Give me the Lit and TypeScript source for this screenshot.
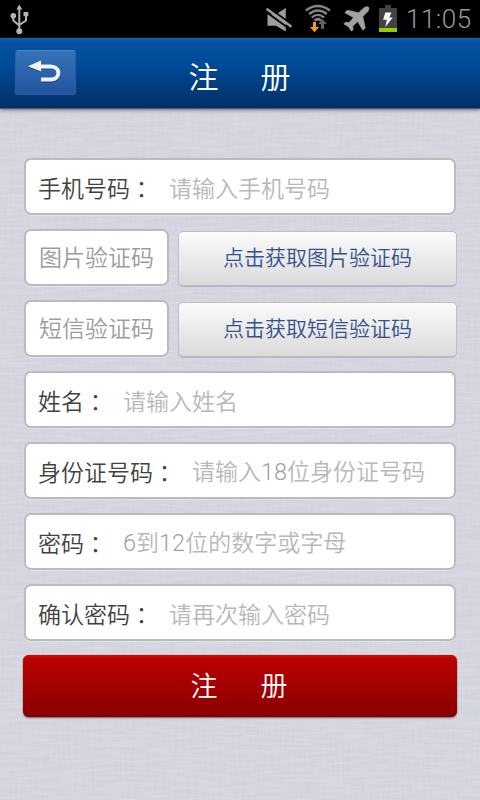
import { LitElement, html, css, nothing } from "lit";
import { customElement, property } from "lit/decorators.js";

@customElement("status-bar")
class StatusBar extends LitElement {
  static styles = css`
    :host {
      display: flex;
      align-items: center;
      height: 38px;
      padding: 0 7px 0 10px;
      background: #000;
      box-sizing: border-box;
    }
    svg { display: block; flex: none; }
    .spacer { flex: 1; }
    .wifi { margin-left: 11px; }
    .plane { margin-left: 11px; }
    .battery { margin-left: 9px; }
    .clock {
      width: 67px;
      margin-left: 9px;
      font: 300 26px/38px Roboto, sans-serif;
      letter-spacing: 0.5px;
      color: #9a9a9a;
      white-space: nowrap;
    }
  `;

  render() {
    return html`
      <svg width="20" height="38" viewBox="10 0 20 38" fill="#b3b3b3">
        <path d="M19.3 4.5l3 5h-6z" />
        <path d="M19.3 8v22M13.3 17v3.5l6 5M26 14v6.5l-6.7 4.5" fill="none" stroke="#b3b3b3" stroke-width="2" />
        <circle cx="13.3" cy="15.7" r="2.8" />
        <rect x="23.5" y="12" width="4.8" height="4.2" />
        <circle cx="19.3" cy="31.2" r="3" />
      </svg>
      <span class="spacer"></span>
      <svg width="28" height="38" viewBox="266 0 28 38">
        <path d="M267.5 14.5h8L285.8 8v23.5l-9.8-5.8h-8.5z" fill="#9d9d9d" />
        <path d="M267 6.5l26 18.8M265 11.2l26 18.8" stroke="#000" stroke-width="1.8" />
        <path d="M266.5 8.8L291.5 26.8" stroke="#9d9d9d" stroke-width="2.4" />
      </svg>
      <svg class="wifi" width="26" height="38" viewBox="305 0 26 38">
        <g fill="none" stroke="#858585" stroke-width="2.3">
          <path d="M305.8 10.5Q317.8 1.5 330 10.5" />
          <path d="M309 14Q317.8 7 326.8 14" />
          <path d="M311.8 17.5Q317.8 12.3 324 17.5" />
          <path d="M314.6 20.6Q317.8 17.6 321 20.6" stroke-width="2.6" />
        </g>
        <path d="M313 22h3v5h3l-4.5 5.3-4.5-5.3h3z" fill="#f79a1c" />
        <path d="M322.5 19l4.3 5h-2.8v5h-3v-5h-2.8z" fill="#626262" />
      </svg>
      <svg class="plane" width="28" height="38" viewBox="342 0 28 38">
        <path d="M368.5 7.2c1 1.2.2 3.4-1.2 4.8l-4.5 4.6 2.4 11.4-2.3 2.2-5.2-8.6-5 4.5.4 3.4-1.6 1.7-3-4.4-4.6-2.9 1.6-1.6 3.6.3 4.5-5-8.7-4.9 2.2-2.4 11.6 2.4 4.7-4.5c1.5-1.3 4-2.1 5.1-1z" fill="#a2a2a2" stroke="#a2a2a2" stroke-width=".7" />
      </svg>
      <svg class="battery" width="18" height="38" viewBox="379 0 18 38">
        <path d="M385 5h6v3h6v24h-18V8h6z" fill="#414141" />
        <rect x="379" y="28" width="18" height="4" fill="#94cd00" />
        <path d="M385.3 12.5h6.2l-2.2 5h3.5L385.3 27l1.6-7.2h-3.8z" fill="#fff" />
      </svg>
      <span class="clock">11:05</span>
    `;
  }
}

@customElement("form-field")
class FormField extends LitElement {
  @property() label = "";
  @property() hint = "";

  static styles = css`
    :host {
      display: flex;
      align-items: center;
      height: 57px;
      box-sizing: border-box;
      padding: 0 0 0 12px;
      border: 2px solid #bababf;
      border-radius: 7px;
      background: #fff;
      box-shadow: 0 1px 0 #e3e3ea;
      font: 350 23px/34px "Noto Sans CJK SC", sans-serif;
      white-space: nowrap;
      overflow: hidden;
    }
    .label { color: #424242; margin-right: 16px; }
    .colon { font: 350 23px/30px "Noto Sans CJK TC", sans-serif; position: relative; top: 1px; }
    .hint { color: #b8b8b8; }
    .code { color: #9c9c9c; position: relative; top: -2px; margin-left: 1px; }
    .latin { font-family: Roboto, sans-serif; font-size: 23.5px; font-weight: 300; color: #a0a0a0; }
  `;

  private hintText() {
    return this.hint
      .split(/(\d+)/)
      .filter(Boolean)
      .map((part) => (/\d/.test(part) ? html`<span class="latin">${part}</span>` : part));
  }

  render() {
    return html`${this.label
        ? html`<span class="label">${this.label}<span class="colon">：</span></span>`
        : nothing}<span class=${this.label ? "hint" : "code"}>${this.hintText()}</span>`;
  }
}

@customElement("app-root")
class AppRoot extends LitElement {
  static styles = css`
    :host {
      display: flex;
      flex-direction: column;
      position: relative;
      width: 480px;
      height: 800px;
      overflow: hidden;
      background: #d4d5df;
      font-family: "Noto Sans CJK SC", sans-serif;
    }
    .weave { position: absolute; inset: 0; width: 100%; height: 100%; opacity: 0.3; }
    status-bar, header, main { position: relative; }
    header {
      display: grid;
      grid-template-columns: 76px 1fr 76px;
      height: 70px;
      background: linear-gradient(#1660ad 0, #0250a0 5px, #014c9a 35%, #003a7a 75%, #003068 100%);
      box-shadow: 0 1px 1px #555d6b, 0 2px 4px #77777c;
    }
    .back {
      width: 61px;
      height: 45px;
      margin: 12px 0 0 15px;
      box-sizing: border-box;
      padding: 0;
      border: 1px solid #285fa6;
      border-top-color: #4c86c4;
      border-radius: 3px;
      background: linear-gradient(#3473b8, #2454a0);
    }
    .back svg { display: block; }
    h1, .submit {
      display: flex;
      justify-content: center;
      margin: 0;
      color: #fff;
      font-weight: 350;
    }
    h1 { font-size: 30px; line-height: 74px; gap: 42px; margin-left: -1px; }
    main {
      display: flex;
      flex-direction: column;
      gap: 14px;
      padding: 50px 24px 0;
    }
    .row { display: grid; grid-template-columns: 145px 279px; gap: 9px; margin-right: -1px; }
    .full { width: 432px; }
    .fetch {
      height: 56px;
      margin-top: 2px;
      margin-bottom: -1px;
      box-sizing: border-box;
      padding: 0 0 5px;
      border: 1px solid #bfc0c5;
      border-bottom: 2px solid #b8b9be;
      border-radius: 5px;
      background: linear-gradient(#fbfbfb, #dadada);
      color: #34528c;
      font: 350 21px/30px "Noto Sans CJK SC", sans-serif;
      white-space: nowrap;
    }
    .submit {
      width: 434px;
      height: 62px;
      margin-left: -1px;
      padding: 0 2px 0 0;
      border: 0;
      border-radius: 6px;
      background: linear-gradient(#bd0000, #8a0000);
      box-shadow: inset 0 2px 0 #e00000, inset 0 -1px 0 #780000, 0 1px 2px #66666a;
      font: 350 27px/60px "Noto Sans CJK SC", sans-serif;
      gap: 43px;
    }
  `;

  render() {
    return html`
      <svg class="weave" aria-hidden="true">
        <filter id="warp" x="0" y="0" width="100%" height="100%">
          <feTurbulence type="fractalNoise" baseFrequency="0.4 0.035" numOctaves="2" seed="4" />
          <feColorMatrix values="0 0 0 0 .4  0 0 0 0 .4  0 0 0 0 .5  .65 0 0 0 -.25" />
        </filter>
        <filter id="weft" x="0" y="0" width="100%" height="100%">
          <feTurbulence type="fractalNoise" baseFrequency="0.035 0.4" numOctaves="2" seed="9" />
          <feColorMatrix values="0 0 0 0 1  0 0 0 0 1  0 0 0 0 1  1 0 0 0 -.38" />
        </filter>
        <rect width="100%" height="100%" filter="url(#warp)" />
        <rect width="100%" height="100%" filter="url(#weft)" />
      </svg>
      <status-bar></status-bar>
      <header>
        <button class="back" aria-label="返回">
          <svg width="59" height="43" viewBox="16 51 59 43">
            <g transform="translate(0 1)" opacity=".35">
              <path d="M28 66.3l13-5.8v11z" fill="#001f55" />
              <path d="M40 66.5h10.5c10.5 0 10.5 13 0 13H41" fill="none" stroke="#001f55" stroke-width="4" />
            </g>
            <path d="M28 66.3l13-5.8v11z" fill="#f2f2f2" />
            <path d="M40 66.5h10.5c10.5 0 10.5 13 0 13H41" fill="none" stroke="#f2f2f2" stroke-width="4" />
          </svg>
        </button>
        <h1><span>注</span><span>册</span></h1>
      </header>
      <main>
        <form-field class="full" label="手机号码" hint="请输入手机号码"></form-field>
        <div class="row">
          <form-field hint="图片验证码"></form-field>
          <button class="fetch">点击获取图片验证码</button>
        </div>
        <div class="row">
          <form-field hint="短信验证码"></form-field>
          <button class="fetch">点击获取短信验证码</button>
        </div>
        <form-field class="full" label="姓名" hint="请输入姓名"></form-field>
        <form-field class="full" label="身份证号码" hint="请输入18位身份证号码"></form-field>
        <form-field class="full" label="密码" hint="6到12位的数字或字母"></form-field>
        <form-field class="full" label="确认密码" hint="请再次输入密码"></form-field>
        <button class="submit"><span>注</span><span>册</span></button>
      </main>
    `;
  }
}
